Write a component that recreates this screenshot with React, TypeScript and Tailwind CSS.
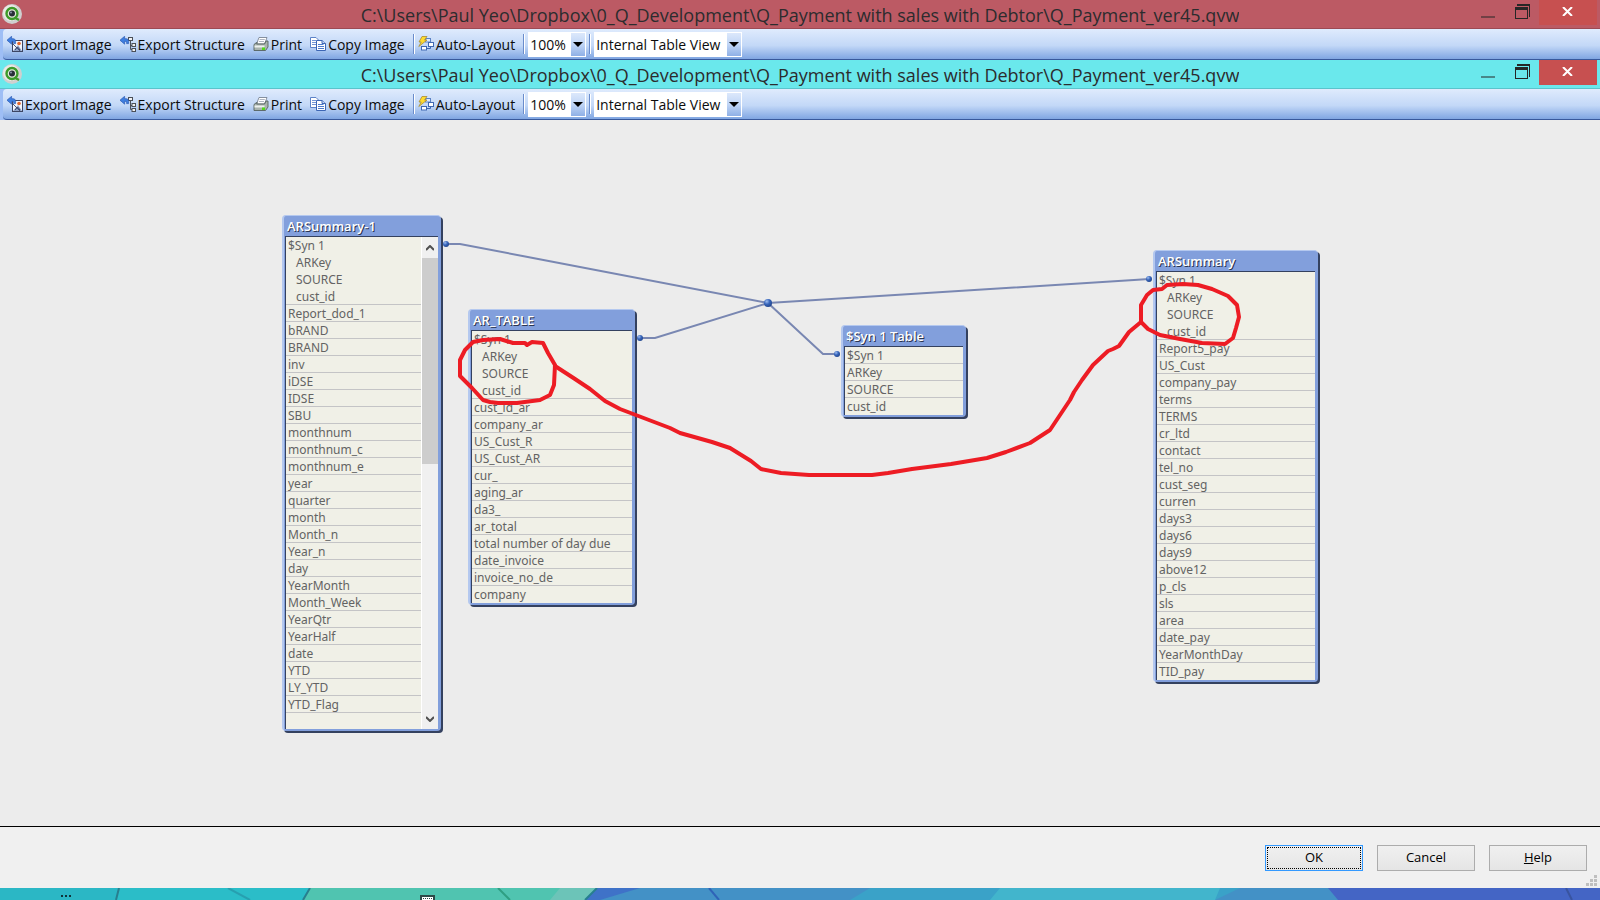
import type { ReactNode } from "react";

const title = "C:\\Users\\Paul Yeo\\Dropbox\\0_Q_Development\\Q_Payment with sales with Debtor\\Q_Payment_ver45.qvw";

const synKeys = ["ARKey", "SOURCE", "cust_id"];

type TableNode = {
    name: string;
    place: string;
    keys: string[];
    fields: string[];
    scroll?: boolean;
};

const tables: TableNode[] = [
    {
        name: "ARSummary-1",
        place: "left-[282px] top-[95px] w-[159px]",
        keys: synKeys,
        fields: [
            "Report_dod_1", "bRAND", "BRAND", "inv", "iDSE", "IDSE", "SBU", "monthnum", "monthnum_c", "monthnum_e",
            "year", "quarter", "month", "Month_n", "Year_n", "day", "YearMonth", "Month_Week", "YearQtr", "YearHalf",
            "date", "YTD", "LY_YTD", "YTD_Flag",
        ],
        scroll: true,
    },
    {
        name: "AR_TABLE",
        place: "left-[468px] top-[189px] w-[167px]",
        keys: synKeys,
        fields: [
            "cust_id_ar", "company_ar", "US_Cust_R", "US_Cust_AR", "cur_", "aging_ar", "da3_", "ar_total",
            "total number of day due", "date_invoice", "invoice_no_de", "company",
        ],
    },
    {
        name: "$Syn 1 Table",
        place: "left-[841px] top-[205px] w-[125px]",
        keys: [],
        fields: synKeys,
    },
    {
        name: "ARSummary",
        place: "left-[1153px] top-[130px] w-[165px]",
        keys: synKeys,
        fields: [
            "Report5_pay", "US_Cust", "company_pay", "terms", "TERMS", "cr_ltd", "contact", "tel_no", "cust_seg",
            "curren", "days3", "days6", "days9", "above12", "p_cls", "sls", "area", "date_pay", "YearMonthDay", "TID_pay",
        ],
    },
];

const dots = [
    { x: 446, y: 124, r: 3 },
    { x: 640, y: 218, r: 3 },
    { x: 837, y: 234, r: 3 },
    { x: 1149, y: 159, r: 3 },
    { x: 768, y: 183, r: 4 },
];

function AppLogo() {
    return (
        <svg width="20" height="22" viewBox="0 0 20 22">
            <circle cx="10" cy="11" r="10" fill="#cfcfcf" />
            <circle cx="9" cy="10" r="8" fill="#e9e9e6" />
            <circle cx="10" cy="10.5" r="5.5" fill="#e3ead9" stroke="#3d9a28" strokeWidth="2.4" />
            <circle cx="10" cy="10.5" r="3" fill="#2a2f38" />
            <circle cx="9" cy="9.5" r="1" fill="#8b96a8" />
            <path d="M12.5 14.5L17 17" stroke="#3d9a28" strokeWidth="2.4" />
        </svg>
    );
}

function BackArrow() {
    return (
        <path d="M0 4.2L4.6 .3V2.7H6.4Q8.6 2.9 8.6 5.4V7.6H6.6V6.2Q6.6 5.4 5.8 5.4H4.6V8.2Z" fill="#3f7fe0" stroke="#2c5cb4" strokeWidth=".7" />
    );
}

function ExportImageIcon() {
    return (
        <svg width="16" height="16" viewBox="0 0 16 16">
            <rect x="5.5" y="4.5" width="10" height="11" fill="#f4f6fb" stroke="#3c4664" />
            <path d="M6 15L11 9L15 15Z" fill="#8ea2c8" />
            <path d="M6 8L13 15" stroke="#4a5576" />
            <circle cx="12" cy="7.5" r="1.8" fill="#e2662c" />
            <path d="M8 14L10.5 11L13 14" fill="none" stroke="#39456c" />
            <BackArrow />
        </svg>
    );
}

function ExportStructureIcon() {
    return (
        <svg width="16" height="16" viewBox="0 0 16 16">
            <path d="M8 3.5H10M10.5 5V13.5H13M10.5 9.5H13" fill="none" stroke="#4a4f58" />
            <rect x="8.5" y="1.5" width="4" height="3" fill="#f1f1f1" stroke="#4a4f58" />
            <rect x="12" y="7.5" width="3.5" height="3" fill="#f1f1f1" stroke="#4a4f58" />
            <rect x="12" y="12.5" width="3.5" height="3" fill="#f1f1f1" stroke="#4a4f58" />
            <BackArrow />
        </svg>
    );
}

function PrintIcon() {
    return (
        <svg width="16" height="16" viewBox="0 0 16 16">
            <path d="M6 1.5H14L11.5 8H3.5Z" fill="#fff" stroke="#7b8494" strokeWidth=".9" />
            <path d="M6.6 3.5H11.8M5.8 5.5H11" stroke="#9aa3b3" strokeWidth=".8" />
            <path d="M1 8.5L3.5 6.5H4.2L3.6 8H11.6L13 5H15V11L12.5 14.5H1Z" fill="#a9b3ae" stroke="#55625f" strokeWidth=".9" />
            <path d="M1.5 9.5H11.5V11.5H1.5Z" fill="#edf1ee" />
            <rect x="9" y="11.5" width="3" height="2.5" fill="#52d81c" />
        </svg>
    );
}

function CopyIcon() {
    return (
        <svg width="16" height="16" viewBox="0 0 16 16">
            <path d="M.5 1.5H6L8.5 4V11.5H.5Z" fill="#fff" stroke="#5d83c8" />
            <path d="M2 4.5H6M2 6.5H7M2 8.5H7" stroke="#7396d6" />
            <path d="M6.5 4.5H12L15.5 7.5V14.5H6.5Z" fill="#fff" stroke="#3d66b4" />
            <path d="M8 8.5H13.5M8 10.5H14M8 12.5H14" stroke="#4f7bcc" />
            <path d="M12 4.5V7.5H15.5" fill="#c7d8f5" stroke="#3d66b4" />
        </svg>
    );
}

function LayoutIcon() {
    return (
        <svg width="16" height="16" viewBox="0 0 16 16">
            <rect x="7.5" y="2.5" width="5" height="3.5" fill="#dce8fb" stroke="#5b82c4" />
            <rect x="10.5" y="6.5" width="5" height="4" fill="#fff" stroke="#3f68b2" />
            <rect x="3.5" y="10.5" width="5" height="3.5" fill="#fff" stroke="#3f68b2" />
            <path d="M8.5 12.5H12.5V10.5" fill="none" stroke="#3f68b2" />
            <path d="M4 .5H9L6.5 4H9L.8 10.5L3.2 6H1Z" fill="#ffdb2e" stroke="#a98d33" strokeWidth=".8" />
        </svg>
    );
}

function TitleBar({ tone }: { tone: string }) {
    return (
        <header className={`grid h-[29px] grid-cols-[1fr_auto_1fr] border-b ${tone}`}>
            <div className="pt-[3px] pl-0.5">
                <AppLogo />
            </div>
            <h1 className="truncate pt-px font-['Open_Sans',sans-serif] text-[18px] leading-[28px] text-[#2c2c2e]">{title}</h1>
            <div className="flex justify-end pr-[3px] text-[#262626]">
                <button type="button" aria-label="Minimize" className="flex w-8 justify-center pt-4">
                    <span className="h-0.5 w-3.5 bg-current opacity-50" />
                </button>
                <button type="button" aria-label="Restore" className="flex w-[35px] items-start justify-center pt-1 pl-0.5">
                    <svg width="15" height="15" viewBox="0 0 15 15" shapeRendering="crispEdges" fill="currentColor">
                        <path d="M2 0H15V13H14V2H2Z" />
                        <path fillRule="evenodd" d="M0 3H13V15H0ZM1 6V14H12V6Z" />
                    </svg>
                </button>
                <button type="button" aria-label="Close" className="flex h-[25px] w-[58px] items-start justify-center bg-[#c75050] pt-[7px] pr-0.5">
                    <svg width="11" height="9" viewBox="0 0 11 9" fill="none" stroke="#fff" strokeWidth="2">
                        <path d="M1 0L10 9M10 0L1 9" />
                    </svg>
                </button>
            </div>
        </header>
    );
}

function ToolButton({ icon, children }: { icon: ReactNode; children: ReactNode }) {
    return (
        <button type="button" className="flex items-center gap-0.5 pr-2 whitespace-nowrap">
            {icon}
            {children}
        </button>
    );
}

function Separator() {
    return <span className="h-5 w-0.5 border-r border-l border-r-white border-l-[#6a8ccb]" />;
}

function ToolSelect({ label, value, width }: { label: string; value: string; width: string }) {
    return (
        <label className={`relative block h-[25px] border border-white bg-white ${width}`}>
            <select aria-label={label} defaultValue={value} className="block h-full w-full appearance-none pr-4 pl-px outline-none">
                <option>{value}</option>
            </select>
            <span className="pointer-events-none absolute inset-y-0 right-0 flex w-3.5 items-center justify-center bg-linear-to-b from-[#dce8fb] via-[#c0d5f5] to-[#8fb0e6]">
                <svg width="10" height="5" viewBox="0 0 10 5">
                    <path d="M0 0H10L5 5Z" />
                </svg>
            </span>
        </label>
    );
}

function Toolbar() {
    return (
        <div className="border-l-[3px] border-[#9ebef5] bg-[#9ebef5]">
            <nav className="flex h-[31px] items-center rounded-l-sm border-b border-[#38599c] bg-linear-to-b from-[#dfebfd] via-[#c3d8f7] via-55% to-[#80a6e2] pl-1 font-['Open_Sans',sans-serif] text-[14px] text-[#0c0c0c]">
                <ToolButton icon={<ExportImageIcon />}>Export Image</ToolButton>
                <ToolButton icon={<ExportStructureIcon />}>Export Structure</ToolButton>
                <ToolButton icon={<PrintIcon />}>Print</ToolButton>
                <ToolButton icon={<CopyIcon />}>Copy Image</ToolButton>
                <Separator />
                <div className="pl-[3px]">
                    <ToolButton icon={<LayoutIcon />}>Auto-Layout</ToolButton>
                </div>
                <Separator />
                <div className="px-[3px]">
                    <ToolSelect label="Zoom" value="100%" width="w-[58px]" />
                </div>
                <Separator />
                <div className="px-[3px]">
                    <ToolSelect label="View" value="Internal Table View" width="w-[148px]" />
                </div>
            </nav>
        </div>
    );
}

function Chevron({ d }: { d: string }) {
    return (
        <svg width="8" height="6" viewBox="0 0 8 6" fill="none" stroke="#505050" strokeWidth="2">
            <path d={d} />
        </svg>
    );
}

function ScrollBar() {
    return (
        <div className="flex w-[17px] flex-col border-l border-white bg-[#f0f0f0]">
            <button type="button" aria-label="Scroll up" className="flex h-[21px] items-center justify-center">
                <Chevron d="M0 5L4 1L8 5" />
            </button>
            <div className="h-[206px] bg-[#cdcdcd]" />
            <button type="button" aria-label="Scroll down" className="mt-auto flex h-[21px] items-center justify-center">
                <Chevron d="M0 1L4 5L8 1" />
            </button>
        </div>
    );
}

function TableBox({ table }: { table: TableNode }) {
    const row = "h-[17px] px-0.5 leading-[18px]";
    const line = "border-b border-[#c4c4c6]";

    return (
        <section className={`absolute rounded-[4px] border-t border-l-2 border-[#b4c8ef] bg-[#829fdc] pr-[3px] pb-0.5 pl-px shadow-[2px_2px_0_#34415f] ${table.place}`}>
            <h2 className="h-5 pl-0.5 font-['Open_Sans',sans-serif] text-[13px] leading-5 font-semibold text-white [text-shadow:1px_1px_0_#2b3550]">
                {table.name}
            </h2>
            <div className="flex border-t border-l border-[#34415f] bg-[#f0f0e7]">
                <ul className={`flex-1 font-['Noto_Sans',sans-serif] text-[12px] whitespace-nowrap text-[#636363] ${table.scroll ? "pb-4" : ""}`}>
                    <li className={table.keys.length ? "" : `${row} ${line}`}>
                        {table.keys.length ? (
                            <>
                                <div className={row}>$Syn 1</div>
                                <ul>
                                    {table.keys.map((key, i) => (
                                        <li key={key} className={`h-[17px] pl-2.5 leading-[18px] ${i === table.keys.length - 1 ? line : ""}`}>
                                            {key}
                                        </li>
                                    ))}
                                </ul>
                            </>
                        ) : (
                            "$Syn 1"
                        )}
                    </li>
                    {table.fields.map((field, i) => (
                        <li key={field} className={`${row} ${i < table.fields.length - 1 || table.scroll ? line : ""}`}>
                            {field}
                        </li>
                    ))}
                </ul>
                {table.scroll && <ScrollBar />}
            </div>
        </section>
    );
}

function Links() {
    return (
        <svg className="absolute top-0 left-0" width="1600" height="706" viewBox="0 0 1600 706">
            <defs>
                <radialGradient id="dot" cx=".35" cy=".3" r=".8">
                    <stop offset="0" stopColor="#9dbcf0" />
                    <stop offset=".45" stopColor="#3866bb" />
                    <stop offset="1" stopColor="#1d3f86" />
                </radialGradient>
            </defs>
            <g fill="none" stroke="#7987b2" strokeWidth="2">
                <path d="M446 124H460L768 183" />
                <path d="M640 218H655L768 183" />
                <path d="M837 234H823L768 183" />
                <path d="M1149 159L1134 160L768 183" />
            </g>
            {dots.map((dot) => (
                <circle key={dot.x} cx={dot.x} cy={dot.y} r={dot.r} fill="url(#dot)" />
            ))}
        </svg>
    );
}

// freehand marker drawn over the diagram
function Marker() {
    return (
        <svg className="pointer-events-none absolute top-0 left-0" width="1600" height="706" viewBox="0 0 1600 706" fill="none" stroke="#ed1c24" strokeWidth="4" strokeLinejoin="round" strokeLinecap="round">
            <path d="M527 225L525 223L513 223L500 219L483 220L473 222L465 230L460 240V256L472 268L483 280L490 282L498 283L517 283L540 280L550 275L554 265L555 245L548 233L543 223L532 222L527 225" />
            <path d="M555 246L575 259L590 269L605 281L620 289L670 308L680 313L712 322L730 328L751 341L761 349L781 353L809 355L872 355L888 353L912 349L951 344L987 338L1006 332L1030 323L1050 310L1060 295L1070 280L1074 272L1082 260L1093 245L1108 231L1113 229L1119 226L1129 212L1141 202" />
            <path d="M1141 202V185L1147 175L1153 170L1162 169L1167 165L1183 164L1198 165L1212 169L1228 176L1237 185L1239 197L1236 208L1233 218L1225 224L1202 223L1180 219L1160 215L1148 209L1141 202" />
        </svg>
    );
}

function DialogButton({ children, focused }: { children: ReactNode; focused?: boolean }) {
    return (
        <button
            type="button"
            className={`h-[26px] w-[98px] border bg-linear-to-b from-[#f0f0f0] to-[#e5e5e5] p-px text-black ${focused ? "border-[#3399ff]" : "border-[#acacac]"}`}
        >
            <span className={`flex h-full items-center justify-center ${focused ? "border border-dotted border-black" : ""}`}>
                <span>{children}</span>
            </span>
        </button>
    );
}

function Desktop() {
    return (
        <div className="h-3 overflow-hidden bg-[#4465c5]">
            <svg className="h-3 w-full" viewBox="0 0 1600 12" preserveAspectRatio="none">
                <path d="M0 0H310L303 12H0Z" fill="#2bb7c5" />
                <path d="M119 0H310L303 12H116Z" fill="#2bbdc8" />
                <path d="M310 0H597L585 12H303Z" fill="#50c4b0" />
                <path d="M560 0H597L585 12H550Z" fill="#6cc4b8" />
                <path d="M597 0H1328L1338 12H585Z" fill="#4391c6" />
                <path d="M597 0H640L600 12H585Z" fill="#3f72c8" />
                <path d="M870 0H1240L1215 12H850Z" fill="#3aa2c8" />
                <path d="M1000 0H1220L1215 12H990Z" fill="#42b5cc" />
                <path d="M119 0L116 12M310 0L303 12M597 0L585 12" stroke="#287f8f" strokeWidth="2" />
                <path d="M228 0L250 12" stroke="#27a0b0" strokeWidth="2" />
                <path d="M1566 0L1572 12" stroke="#39549f" strokeWidth="2" />
                <path d="M498 0L510 12" stroke="#2f9f82" strokeWidth="2" />
                <path d="M709 0L719 12" stroke="#2f63b8" strokeWidth="2" />
                <path d="M61 7h2v2h-2zM65 7h2v2h-2zM69 7h2v2h-2z" fill="#10333a" />
                <path d="M420 7H435V12H420Z" fill="#2c4a48" />
                <path d="M422 9H433V12H422Z" fill="#fff" />
                <path d="M423 10.5H432" stroke="#2c4a48" strokeDasharray="1 1" />
            </svg>
        </div>
    );
}

export default function App() {
    return (
        <div className="flex min-h-screen flex-col bg-[#f0f0f0]">
            <TitleBar tone="border-[#9c4a54] bg-[#bc5a64]" />
            <Toolbar />
            <TitleBar tone="border-[#5ac4cc] bg-[#6ae8ec]" />
            <Toolbar />
            <main className="relative min-h-[640px] flex-1 overflow-hidden bg-[#ececec]">
                <Links />
                {tables.map((table) => (
                    <TableBox key={table.name} table={table} />
                ))}
                <Marker />
            </main>
            <footer className="relative flex justify-end gap-3.5 border-t border-black pt-[18px] pr-[13px] pb-[17px] font-['Open_Sans',sans-serif] text-[13px]">
                <DialogButton focused>OK</DialogButton>
                <DialogButton>Cancel</DialogButton>
                <DialogButton>
                    <span className="underline">H</span>elp
                </DialogButton>
                <svg className="absolute right-[3px] bottom-0.5" width="11" height="11" viewBox="0 0 11 11" fill="#bfbfbf">
                    <path d="M8 0h3v3H8zM4 4h3v3H4zM8 4h3v3H8zM0 8h3v3H0zM4 8h3v3H4zM8 8h3v3H8z" />
                </svg>
            </footer>
            <Desktop />
        </div>
    );
}
